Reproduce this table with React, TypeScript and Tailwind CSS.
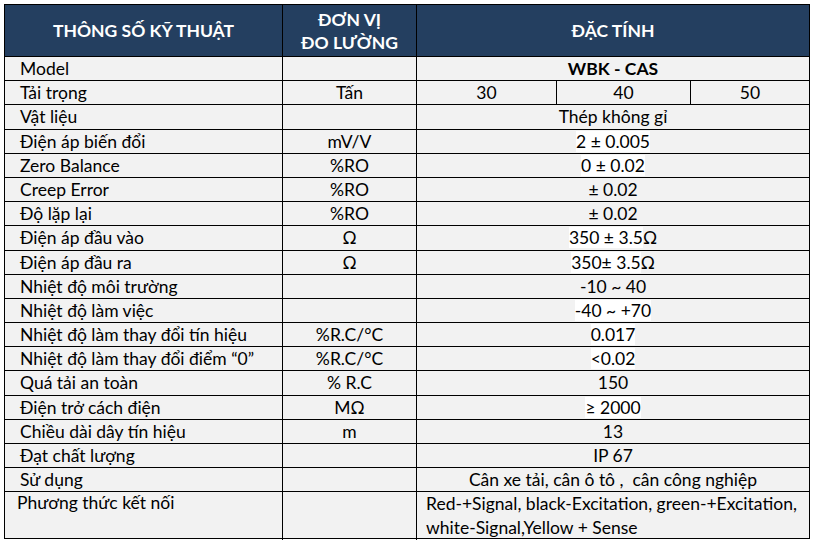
import React from 'react';

type Row = {
   name: string;
   unit?: string;
   value: React.ReactNode;
};

const hl = (text: string, tail?: string) => (
   <span>
      <span className="bg-white">{text}</span>
      {tail}
   </span>
);

const rows: Row[] = [
   { name: 'Vật liệu', value: 'Thép không gỉ' },
   { name: 'Điện áp biến đổi', unit: 'mV/V', value: hl('2 ± 0.005') },
   { name: 'Zero Balance', unit: '%RO', value: hl('0 ± 0.02') },
   { name: 'Creep Error', unit: '%RO', value: '± 0.02' },
   { name: 'Độ lặp lại', unit: '%RO', value: '± 0.02' },
   { name: 'Điện áp đầu vào', unit: 'Ω', value: hl('350 ± 3.5', 'Ω') },
   { name: 'Điện áp đầu ra', unit: 'Ω', value: hl('350± 3.5', 'Ω') },
   { name: 'Nhiệt độ môi trường', value: '-10 ~ 40' },
   { name: 'Nhiệt độ làm việc', value: hl('-40 ~ +70') },
   { name: 'Nhiệt độ làm thay đổi tín hiệu', unit: '%R.C/°C', value: hl('0.017') },
   { name: 'Nhiệt độ làm thay đổi điểm “0”', unit: '%R.C/°C', value: hl('<0.02') },
   { name: 'Quá tải an toàn', unit: '% R.C', value: '150' },
   { name: 'Điện trở cách điện', unit: 'MΩ', value: hl('≥ 2000') },
   { name: 'Chiều dài dây tín hiệu', unit: 'm', value: '13' },
   { name: 'Đạt chất lượng', value: 'IP 67' },
   { name: 'Sử dụng', value: 'Cân xe tải, cân ô tô ,  cân công nghiệp' },
];

const cols = 'grid grid-cols-[278px_134px_1fr]';

const App = () => {
   return (
      <div className="w-[816px] h-[544px] bg-white pt-[4px] pl-[4px]">
         <div className="w-[806px] border border-black bg-[#f2f2f2] text-black text-[17.5px] leading-[21px] font-['Lato','Liberation_Sans',sans-serif]">
            {/* header */}
            <div className={`${cols} h-[51px] bg-[#243f60] text-white font-bold text-[17.5px] leading-[23px]`}>
               <div className="flex items-center justify-center border-r border-black">
                  THÔNG SỐ KỸ THUẬT
               </div>
               <div className="flex flex-col items-center justify-center border-r border-black">
                  <span>ĐƠN VỊ</span>
                  <span>ĐO LƯỜNG</span>
               </div>
               <div className="flex items-center justify-center">ĐẶC TÍNH</div>
            </div>

            <div className={`${cols} h-[24.2px] border-t border-black`}>
               <div className="pl-[15px] pt-[1px] border-r border-black">Model</div>
               <div className="border-r border-black" />
               <div className="text-center pt-[1px] font-bold">WBK - CAS</div>
            </div>

            <div className={`${cols} h-[24.2px] border-t border-black`}>
               <div className="pl-[15px] pt-[1px] border-r border-black">Tải trọng</div>
               <div className="text-center pt-[1px] border-r border-black">Tấn</div>
               <div className="grid grid-cols-[140px_134px_1fr]">
                  <div className="text-center pt-[1px] border-r border-black">30</div>
                  <div className="text-center pt-[1px] border-r border-black">40</div>
                  <div className="text-center pt-[1px]">50</div>
               </div>
            </div>

            {rows.map((r) => (
               <div key={r.name} className={`${cols} h-[24.2px] border-t border-black`}>
                  <div className="pl-[15px] pt-[1px] border-r border-black whitespace-nowrap">
                     {r.name}
                  </div>
                  <div className="text-center pt-[1px] border-r border-black">{r.unit}</div>
                  <div className="text-center pt-[1px] whitespace-pre">{r.value}</div>
               </div>
            ))}

            <div className={`${cols} h-[47px] border-t border-black`}>
               <div className="pl-[12px] pt-[0px] border-r border-black">Phương thức kết nối</div>
               <div className="border-r border-black" />
               <div className="pl-[9px] pt-[0px] leading-[24px] whitespace-nowrap">
                  Red-+Signal, black-Excitation, green-+Excitation,
                  <br />
                  white-Signal,Yellow + Sense
               </div>
            </div>
         </div>
      </div>
   );
};

export default App;
